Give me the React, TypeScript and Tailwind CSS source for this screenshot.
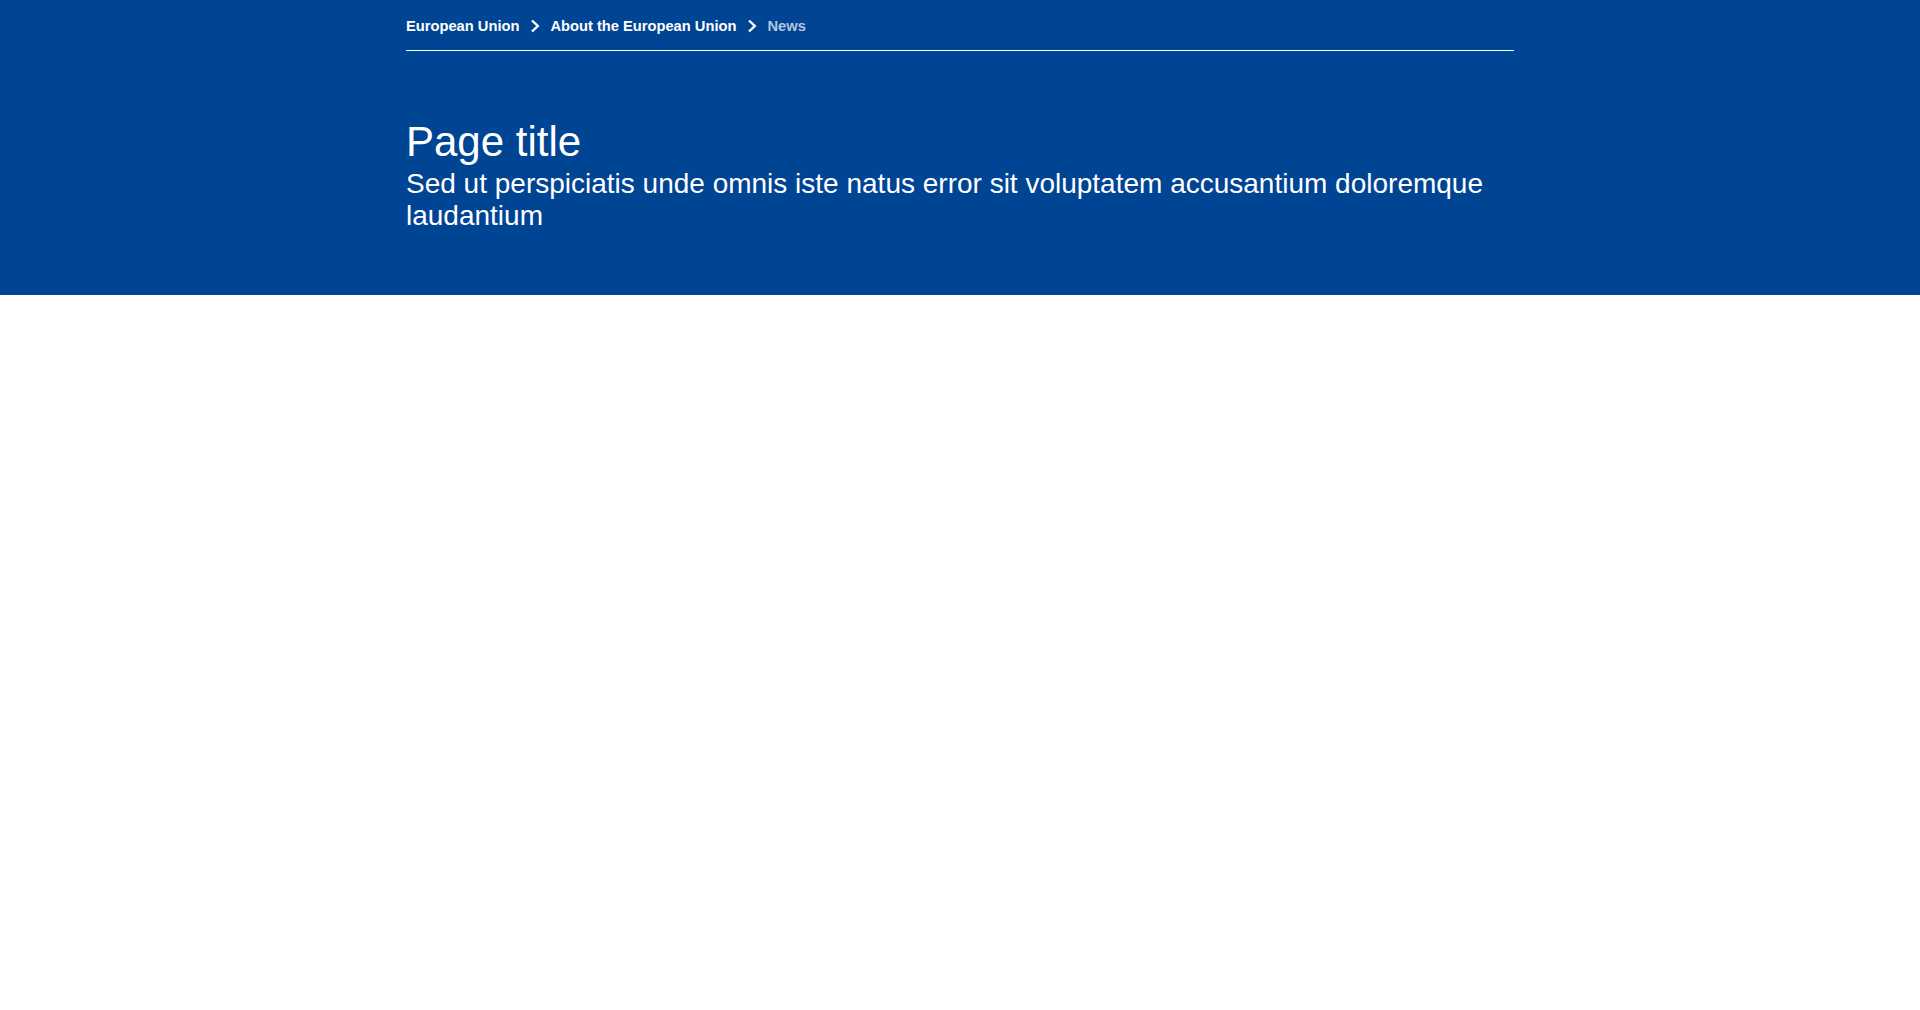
import React from "react";

function Chevron() {
  return (
    <svg width="10" height="14" viewBox="0 0 10 14" className="shrink-0" aria-hidden="true">
      <path d="M2 1.5 L7.8 7 L2 12.5" fill="none" stroke="white" strokeWidth="2.4" strokeLinecap="butt" strokeLinejoin="miter" />
    </svg>
  );
}

export default function App() {
  return (
    <div className="min-h-[1010px] bg-white" style={{ fontFamily: '"Liberation Sans", Arial, sans-serif' }}>
      <div className="bg-[#004494] text-white">
        <div className="w-[1140px] mx-auto px-4">
          <nav className="pt-[16px] pb-[14px] border-b border-white flex items-center text-[14.7px] leading-[20px] font-bold">
            <span>European Union</span>
            <span className="ml-[11px] mr-[10px] flex items-center"><Chevron /></span>
            <span>About the European Union</span>
            <span className="ml-[11px] mr-[10px] flex items-center"><Chevron /></span>
            <span className="text-[#b7c4e0]">News</span>
          </nav>
          <div className="pt-[67px] pb-[63px]">
            <h1 className="text-[42px] leading-[48px] font-normal">Page title</h1>
            <p className="mt-[2px] text-[28px] leading-[32px]">
              Sed ut perspiciatis unde omnis iste natus error sit voluptatem accusantium doloremque laudantium
            </p>
          </div>
        </div>
      </div>
    </div>
  );
}
